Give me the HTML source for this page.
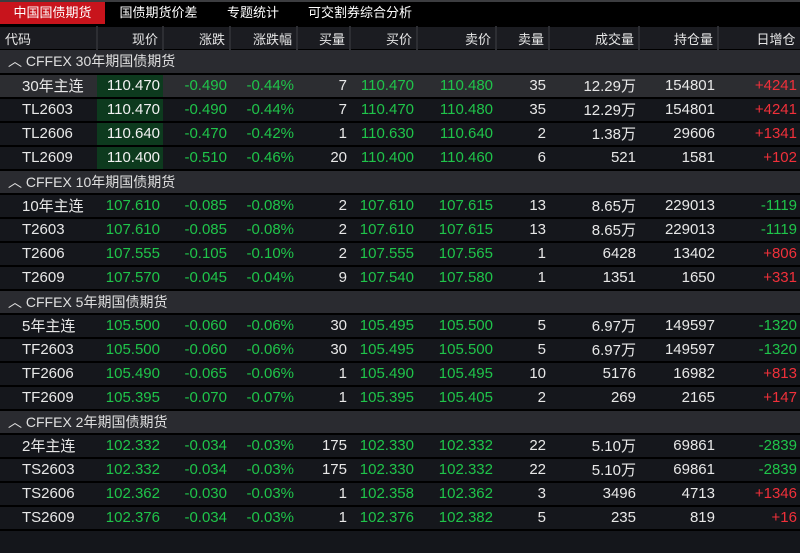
<!DOCTYPE html><html><head><meta charset="utf-8"><style>
*{margin:0;padding:0;box-sizing:border-box}
body{width:800px;height:553px;background:#14161b;font-family:"Liberation Sans","Noto Sans CJK SC",sans-serif;color:#e8e8e8;overflow:hidden;position:relative}
.top{position:absolute;left:0;top:0;width:800px;height:2px;background:#3c3d40}
.tabs{position:absolute;left:0;top:2px;width:800px;height:24px;background:#000;font-size:13px}
.tab{position:absolute;top:0;height:22px;line-height:22px;text-align:center;color:#fff}
table{position:absolute;left:0;top:26px;border-collapse:collapse;table-layout:fixed;width:800px;font-size:15px}
th{height:23px;background:#1b1c21;font-weight:normal;font-size:13px;text-align:right;padding-right:4px;border:1px solid #000;border-left:2px solid #2d2e33;color:#e6e6e6}
th:first-child{text-align:left;padding-left:5px;border-left:none}
td{height:24px;border-bottom:2px solid #000;text-align:right;padding-right:3px;white-space:nowrap;background:#15171c}
td:first-child{text-align:left;padding-left:22px}
tr.g td{background:#2a2b30;padding-left:8px;font-size:14px;color:#e0e0e0}
tr.h td{background:#2c2d31}
.gr{color:#1fc44a}.rd{color:#f0303a}
td.p{background:#0d3a1e!important;color:#f2f2f2}
</style></head><body>
<div class="top"></div>
<div class="tabs">
<div class="tab" style="left:0;width:105px;background:#c8141c">中国国债期货</div>
<div class="tab" style="left:105px;width:107px">国债期货价差</div>
<div class="tab" style="left:213px;width:80px">专题统计</div>
<div class="tab" style="left:295px;width:130px">可交割券综合分析</div>
</div>
<table>
<colgroup><col style="width:97px"><col style="width:66px"><col style="width:67px"><col style="width:67px"><col style="width:53px"><col style="width:67px"><col style="width:79px"><col style="width:53px"><col style="width:90px"><col style="width:79px"><col style="width:82px"></colgroup>
<tr><th>代码</th><th>现价</th><th>涨跌</th><th>涨跌幅</th><th>买量</th><th>买价</th><th>卖价</th><th>卖量</th><th>成交量</th><th>持仓量</th><th>日增仓</th></tr>
<tr class="g"><td colspan="11">︿ CFFEX 30年期国债期货</td></tr>
<tr class="h"><td>30年主连</td><td class="p">110.470</td><td class="gr">-0.490</td><td class="gr">-0.44%</td><td>7</td><td class="gr">110.470</td><td class="gr">110.480</td><td>35</td><td>12.29万</td><td>154801</td><td class="rd">+4241</td></tr>
<tr><td>TL2603</td><td class="p">110.470</td><td class="gr">-0.490</td><td class="gr">-0.44%</td><td>7</td><td class="gr">110.470</td><td class="gr">110.480</td><td>35</td><td>12.29万</td><td>154801</td><td class="rd">+4241</td></tr>
<tr><td>TL2606</td><td class="p">110.640</td><td class="gr">-0.470</td><td class="gr">-0.42%</td><td>1</td><td class="gr">110.630</td><td class="gr">110.640</td><td>2</td><td>1.38万</td><td>29606</td><td class="rd">+1341</td></tr>
<tr><td>TL2609</td><td class="p">110.400</td><td class="gr">-0.510</td><td class="gr">-0.46%</td><td>20</td><td class="gr">110.400</td><td class="gr">110.460</td><td>6</td><td>521</td><td>1581</td><td class="rd">+102</td></tr>
<tr class="g"><td colspan="11">︿ CFFEX 10年期国债期货</td></tr>
<tr><td>10年主连</td><td class="gr">107.610</td><td class="gr">-0.085</td><td class="gr">-0.08%</td><td>2</td><td class="gr">107.610</td><td class="gr">107.615</td><td>13</td><td>8.65万</td><td>229013</td><td class="gr">-1119</td></tr>
<tr><td>T2603</td><td class="gr">107.610</td><td class="gr">-0.085</td><td class="gr">-0.08%</td><td>2</td><td class="gr">107.610</td><td class="gr">107.615</td><td>13</td><td>8.65万</td><td>229013</td><td class="gr">-1119</td></tr>
<tr><td>T2606</td><td class="gr">107.555</td><td class="gr">-0.105</td><td class="gr">-0.10%</td><td>2</td><td class="gr">107.555</td><td class="gr">107.565</td><td>1</td><td>6428</td><td>13402</td><td class="rd">+806</td></tr>
<tr><td>T2609</td><td class="gr">107.570</td><td class="gr">-0.045</td><td class="gr">-0.04%</td><td>9</td><td class="gr">107.540</td><td class="gr">107.580</td><td>1</td><td>1351</td><td>1650</td><td class="rd">+331</td></tr>
<tr class="g"><td colspan="11">︿ CFFEX 5年期国债期货</td></tr>
<tr><td>5年主连</td><td class="gr">105.500</td><td class="gr">-0.060</td><td class="gr">-0.06%</td><td>30</td><td class="gr">105.495</td><td class="gr">105.500</td><td>5</td><td>6.97万</td><td>149597</td><td class="gr">-1320</td></tr>
<tr><td>TF2603</td><td class="gr">105.500</td><td class="gr">-0.060</td><td class="gr">-0.06%</td><td>30</td><td class="gr">105.495</td><td class="gr">105.500</td><td>5</td><td>6.97万</td><td>149597</td><td class="gr">-1320</td></tr>
<tr><td>TF2606</td><td class="gr">105.490</td><td class="gr">-0.065</td><td class="gr">-0.06%</td><td>1</td><td class="gr">105.490</td><td class="gr">105.495</td><td>10</td><td>5176</td><td>16982</td><td class="rd">+813</td></tr>
<tr><td>TF2609</td><td class="gr">105.395</td><td class="gr">-0.070</td><td class="gr">-0.07%</td><td>1</td><td class="gr">105.395</td><td class="gr">105.405</td><td>2</td><td>269</td><td>2165</td><td class="rd">+147</td></tr>
<tr class="g"><td colspan="11">︿ CFFEX 2年期国债期货</td></tr>
<tr><td>2年主连</td><td class="gr">102.332</td><td class="gr">-0.034</td><td class="gr">-0.03%</td><td>175</td><td class="gr">102.330</td><td class="gr">102.332</td><td>22</td><td>5.10万</td><td>69861</td><td class="gr">-2839</td></tr>
<tr><td>TS2603</td><td class="gr">102.332</td><td class="gr">-0.034</td><td class="gr">-0.03%</td><td>175</td><td class="gr">102.330</td><td class="gr">102.332</td><td>22</td><td>5.10万</td><td>69861</td><td class="gr">-2839</td></tr>
<tr><td>TS2606</td><td class="gr">102.362</td><td class="gr">-0.030</td><td class="gr">-0.03%</td><td>1</td><td class="gr">102.358</td><td class="gr">102.362</td><td>3</td><td>3496</td><td>4713</td><td class="rd">+1346</td></tr>
<tr><td>TS2609</td><td class="gr">102.376</td><td class="gr">-0.034</td><td class="gr">-0.03%</td><td>1</td><td class="gr">102.376</td><td class="gr">102.382</td><td>5</td><td>235</td><td>819</td><td class="rd">+16</td></tr>
</table>
</body></html>
